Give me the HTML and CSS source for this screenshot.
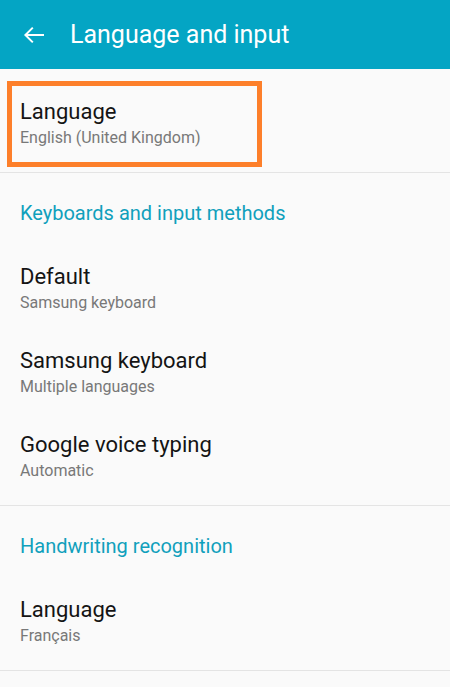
FILE: index.html
```html
<!DOCTYPE html>
<html lang="en">
<head>
<meta charset="utf-8">
<title>Language and input</title>
<link rel="stylesheet" href="styles.css">
</head>
<body>
<header class="appbar">
  <span class="back">
    <svg width="24" height="24" viewBox="0 0 24 24" aria-hidden="true">
      <path d="M22 12H4M10.8 4.6 3.4 12l7.4 7.4" fill="none" stroke="#fff" stroke-width="2"/>
    </svg>
  </span>
  <h1 class="appbar-title">Language and input</h1>
</header>
<main class="list">
  <section class="group group-first">
    <div class="item">
      <span class="highlight"></span>
      <div class="item-title">Language</div>
      <div class="item-sub">English (United Kingdom)</div>
    </div>
  </section>
  <section class="group">
    <h2 class="group-title">Keyboards and input methods</h2>
    <div class="item">
      <div class="item-title">Default</div>
      <div class="item-sub">Samsung keyboard</div>
    </div>
    <div class="item">
      <div class="item-title">Samsung keyboard</div>
      <div class="item-sub">Multiple languages</div>
    </div>
    <div class="item">
      <div class="item-title">Google voice typing</div>
      <div class="item-sub">Automatic</div>
    </div>
  </section>
  <section class="group">
    <h2 class="group-title">Handwriting recognition</h2>
    <div class="item">
      <div class="item-title">Language</div>
      <div class="item-sub">Français</div>
    </div>
  </section>
</main>
</body>
</html>
```
FILE: styles.css
```css
html, body {
  margin: 0;
  padding: 0;
}
body {
  background: #fafafa;
  font-family: Roboto, "Noto Sans", "Liberation Sans", sans-serif;
  width: 450px;
  height: 687px;
  overflow: hidden;
}
.appbar {
  height: 69px;
  background: #04a5c4;
  display: flex;
  align-items: center;
  box-sizing: border-box;
  padding-top: 1px;
}
.back {
  width: 24px;
  height: 24px;
  margin-left: 22px;
  display: flex;
}
.appbar-title {
  margin: 0 0 0 24px;
  font-size: 25px;
  font-weight: 400;
  color: #fff;
  line-height: 30px;
}
.list {
  display: flex;
  flex-direction: column;
}
.group {
  border-bottom: 1px solid #e4e4e4;
}
.group-first {
  padding-top: 19px;
}
.group-title {
  margin: 0;
  height: 80px;
  box-sizing: border-box;
  padding: 28px 20px 0;
  font-size: 20px;
  font-weight: 400;
  line-height: 24px;
  color: #10a0bc;
}
.item {
  position: relative;
  height: 84px;
  box-sizing: border-box;
  padding: 10px 20px 0;
}
.item-title {
  font-size: 22px;
  line-height: 28px;
  color: #141414;
}
.item-sub {
  margin-top: 2px;
  font-size: 16px;
  line-height: 20px;
  color: #787878;
}
.highlight {
  position: absolute;
  left: 7px;
  top: -7px;
  width: 255px;
  height: 86px;
  box-sizing: border-box;
  border: 5px solid #fd7f2a;
}
```
